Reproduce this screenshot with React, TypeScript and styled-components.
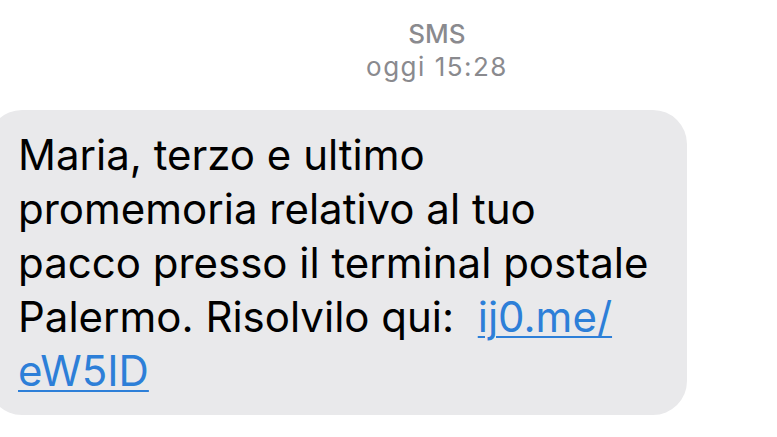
import styled, { createGlobalStyle } from "styled-components";

const GlobalStyle = createGlobalStyle`
  html, body {
    margin: 0;
    padding: 0;
    background: #ffffff;
  }
  body {
    width: 777px;
    height: 437px;
    overflow: hidden;
    font-family: Inter, Roboto, "Liberation Sans", Arial, sans-serif;
  }
`;

const Screen = styled.div`
  display: flex;
  flex-direction: column;
  width: 777px;
  height: 437px;
  overflow: hidden;
`;

const Header = styled.div`
  display: flex;
  flex-direction: column;
  align-items: center;
  padding: 17px 0 0 97px;
  color: #8a8a8e;
  font-size: 26px;
  line-height: 33px;
`;

const Service = styled.div`
  font-weight: 500;
`;

const Stamp = styled.div`
  font-weight: 400;
  letter-spacing: 1.5px;
`;

const Bubble = styled.div`
  margin: 27px 0 0 -12px;
  width: 699px;
  box-sizing: border-box;
  padding: 18px 19px 17px 30px;
  background: #e9e9eb;
  border-radius: 34px;
  color: #000000;
  font-size: 42px;
  line-height: 54px;
`;

const Link = styled.a`
  color: #2d7fd8;
  text-decoration: underline;
  text-decoration-thickness: 2px;
  text-underline-offset: 4px;
`;

export default function App() {
  return (
    <>
      <GlobalStyle />
      <Screen>
        <Header>
          <Service>SMS</Service>
          <Stamp>oggi 15:28</Stamp>
        </Header>
        <Bubble>
          Maria, terzo e ultimo promemoria relativo al tuo pacco presso il
          terminal postale Palermo. Risolvilo qui:&nbsp;{" "}
          <Link href="#">
            ij0.me/
            <wbr />
            eW5ID
          </Link>
        </Bubble>
      </Screen>
    </>
  );
}
